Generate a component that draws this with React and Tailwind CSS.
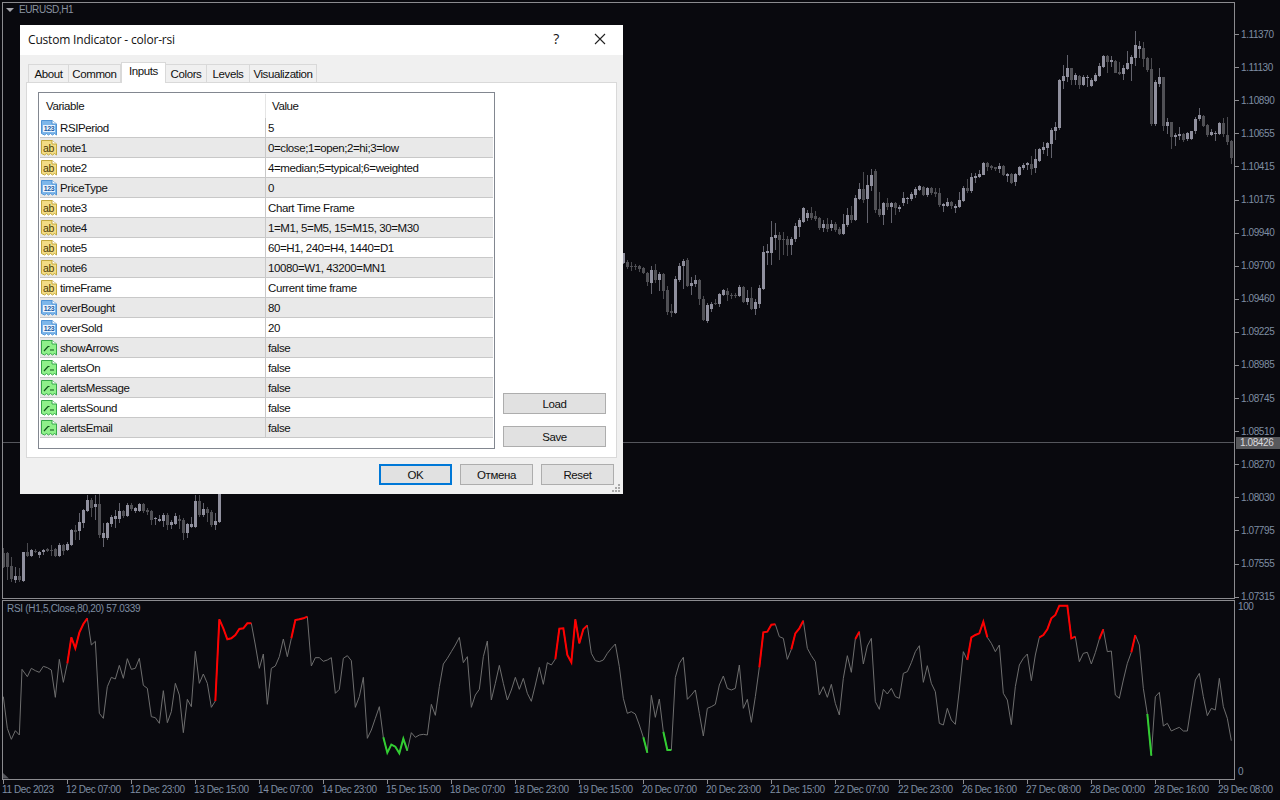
const L = `10 218 262 205 265 d,22 218 262 216 300 d,34 258 297 230 305 d,46 288 300 260 310 l,58 288 300 265 305 d,70 216 303 215 305 l,82 216 228 190 230 d,94 210 228 208 232 l,106 212 216 208 220 d,118 216 225 212 235 l,130 210 216 208 225 l,142 208 213 204 216 d,154 210 213 195 228 d,166 207 228 205 230 d,178 195 228 190 230 l,190 195 213 192 225 d,202 192 210 185 214 l,214 150 195 148 198 l,226 150 156 135 180 d,238 126 153 100 180 l,250 90 129 88 145 l,262 60 93 45 95 l,274 60 84 55 110 d,286 72 81 45 120 l,298 72 165 40 175 d,310 159 174 130 200 l,322 129 174 125 180 l,334 111 132 105 140 l,346 108 117 90 145 l,358 93 117 68 130 l,370 93 108 90 115 d,382 75 108 70 112 l,394 75 87 70 92 d,406 84 93 80 100 l,418 72 93 68 96 l,430 72 93 68 100 d,442 90 96 85 105 d,454 93 120 90 135 d,466 114 118 110 135 l,478 118 122 105 125 l,490 105 123 100 142 l,502 105 135 100 150 d,514 126 135 120 148 l,526 108 132 100 135 l,538 117 123 105 148 d,550 120 159 115 180 d,562 132 159 128 175 l,574 132 141 110 145 l,586 63 141 45 143 l,598 63 105 45 110 d,610 87 105 70 110 l,622 87 99 80 125 d,634 96 135 90 140 d,646 123 135 100 150 l,658 42 126 40 130 l`;
const M = `10 760 790 758 792 l,22 786 800 780 808 d,34 798 801 786 812 d,46 798 801 792 810 d,58 798 806 795 815 d,70 804 820 800 822 d,82 820 846 815 858 d,94 810 849 798 882 l,106 810 840 793 850 d,118 822 840 815 872 l,130 822 872 818 898 d,142 870 936 858 945 d,154 933 939 912 950 d,166 837 939 828 942 l,178 798 840 790 846 l,190 783 798 778 868 l,202 780 858 774 862 d,214 849 858 830 885 l,226 840 852 825 860 l,238 840 897 838 915 d,250 897 960 888 963 d,262 915 963 908 968 l,274 912 927 905 936 l,286 909 912 898 915 d,298 882 912 880 920 l,310 870 885 867 888 l,322 873 885 864 902 d,334 885 888 880 898 d,346 885 888 878 895 d,358 861 888 855 892 l,370 861 906 858 910 d,382 894 906 870 915 l,394 894 927 862 930 d,406 906 927 898 945 l,418 864 912 856 925 l,430 756 866 738 870 l,442 753 759 732 795 l,454 711 759 662 795 l,466 705 714 668 750 l,478 705 720 696 780 d,490 717 720 696 765 d,502 717 735 708 768 d,514 717 735 712 765 l,526 678 717 670 725 l,538 660 681 655 710 l,550 624 666 620 668 l,562 639 654 630 662 l,574 639 654 620 660 d,586 648 657 634 662 d,598 654 684 650 690 d,610 672 684 660 695 l,622 672 687 655 695 d,634 672 684 660 692 l,646 672 690 665 695 d,658 687 702 680 705 d,670 672 702 642 704 l,682 645 675 625 680 l,694 645 660 618 668 d,706 594 660 585 662 l,718 567 597 548 600 l,730 567 600 516 610 d,742 555 597 525 668 l,754 525 558 507 572 l,766 513 630 507 640 d,778 627 645 575 650 d,790 609 645 605 675 l,802 609 621 595 630 d,814 609 621 605 668 l,826 609 624 605 645 d,838 621 627 615 635 l,850 594 609 575 618 l,862 594 597 590 612 l,874 582 597 575 602 l,886 567 585 562 594 l,898 558 570 555 572 l,910 561 585 558 588 d,922 564 585 560 590 l,934 564 579 562 585 d,946 576 582 565 590 d,958 579 615 565 620 d,970 612 618 608 636 l,982 606 618 595 620 l`;
const R = `4 606 618 604 628 d,16 618 624 612 638 l,28 600 621 575 625 l,40 564 603 558 606 l,52 564 573 538 578 d,64 531 573 520 578 l,76 528 534 520 548 l,88 522 531 510 534 l,100 489 525 487 526 l,112 489 501 486 512 d,124 498 504 495 510 d,136 502 507 500 512 d,148 498 507 490 520 l,160 498 525 496 528 d,172 522 528 518 545 l,184 522 549 518 552 d,196 522 546 520 558 l,208 501 525 497 528 l,220 495 504 490 510 l,232 489 495 486 510 l,244 492 507 468 525 d,256 477 504 447 520 l,268 447 483 445 485 l,280 441 450 426 462 l,292 429 444 426 468 l,304 390 432 384 474 l,316 381 393 365 420 l,328 240 384 238 390 l,340 228 243 195 267 l,352 204 231 165 245 l,364 204 240 204 255 d,376 225 240 218 255 l,388 228 255 225 268 d,400 231 255 225 258 l,412 231 234 224 262 l,424 240 258 235 260 l,436 225 243 220 245 l,448 198 228 190 230 l,460 168 201 165 205 l,472 168 186 165 220 d,484 180 186 168 200 l,496 183 219 180 220 d,508 216 222 186 225 d,520 204 222 195 240 l,532 189 207 153 210 l,544 171 192 165 243 l,556 135 174 93 198 l,568 138 147 123 175 l,580 144 177 125 200 d,592 175 210 172 215 d,604 207 372 175 378 d,616 246 372 240 378 l,628 231 252 205 262 l,640 231 378 230 392 d,652 366 378 355 402 l,664 366 411 365 447 d,676 405 411 400 438 l,688 402 408 382 420 l,700 402 420 400 425 d,712 399 417 395 423 l,724 393 417 392 420 l,736 357 393 350 402 l,748 345 357 324 362 l,760 348 378 345 382 d,772 375 405 372 410 d,784 396 405 388 408 l,796 399 402 392 424 l,808 369 402 365 406 l,820 369 402 355 410 d,832 405 426 350 435 d,844 423 474 420 492 d`;
const parse = (s, ox, oy) => s.split(",").map((r) => { const p = r.split(" "); return { x: Math.round(ox + +p[0] / 3), t: oy + +p[1] / 3, b: oy + +p[2] / 3, h: oy + +p[3] / 3, l: oy + +p[4] / 3, c: p[5] }; });
const candles = [...parse(L, 0, 480), ...parse(M, 620, 0), ...parse(R, 950, 0)];

const A = `10:650 22:745 34:778 46:752 58:765 66:568 82:590 94:565 106:572 118:577 130:559 142:563 154:570 166:652 178:538 190:607 202:550 214:472 226:505 238:458 250:432 262:415 274:495 286:484 298:700 310:715 322:620 334:592 346:597 358:556 370:595 382:536 394:568 406:565 418:535 430:616 442:625 454:710 466:713 478:730 490:632 502:728 514:695 526:610 538:645 550:758 562:658 574:680 586:514 598:610 610:582 622:610 634:682 646:663 658:418 670:445 682:478 694:475 706:465 718:447 730:445 742:430 754:430 766:495 778:565 790:522 802:673 814:565 826:558 838:530 850:477 862:530 874:475 886:420 898:418 910:415 922:410 934:558 946:533 958:533`;
const B = `10:214 22:210 34:203 46:310 58:298 70:205 82:197 94:212 106:352 118:320 130:262 142:445 154:420 166:385 178:350 190:442 202:488 214:464 226:470 238:490 250:446 262:482 274:428 286:442 298:435 310:433 322:435 334:343 346:376 358:290 370:222 382:205 394:185 406:165 418:142 430:218 442:200 454:352 466:315 478:298 490:200 502:153 514:330 526:280 538:226 550:280 562:330 574:300 586:262 598:298 610:265 622:310 634:334 646:285 658:232 670:283 682:218 694:225 706:207 718:116 730:115 742:195 754:217 766:88 778:160 790:118 802:106 814:190 826:212 838:215 850:210 862:190 874:175 886:162 898:230 910:325 922:370 934:365 946:372 958:405 970:442 982:488 994:316 1006:382 1018:327 1030:425 1042:480 1054:480 1066:262 1078:220 1090:202 1102:328 1114:315 1126:300 1138:370 1150:438 1162:355 1174:350 1186:343 1198:285 1210:258 1222:295 1234:300 1246:295 1258:225 1270:355 1282:328 1294:397 1306:320 1318:232 1330:127 1342:125 1354:104 1366:103 1378:140 1390:145 1402:208 1414:178 1426:130 1438:115`;
const C = `10:92 22:175 34:197 46:215 58:315 70:290 82:322 94:283 106:340 118:375 130:265 142:197 154:247 166:147 178:125 190:222 202:168 214:145 226:335 238:358 250:298 262:312 274:295 286:320 298:325 310:250 322:245 334:218 346:185 358:167 370:277 382:227 394:280 406:305 418:400 430:405 442:355 454:390 466:403 478:300 490:185 502:210 514:142 526:135 538:130 550:95 562:142 574:160 586:185 598:165 610:310 622:330 634:404 646:290 658:225 670:205 682:192 694:272 706:195 718:142 730:135 742:118 754:85 766:75 778:47 790:47 802:47 814:145 826:140 838:215 850:190 862:187 874:222 886:188 898:147 910:118 922:185 934:183 946:315 958:325 970:270 982:220 994:187 1006:135 1018:165 1030:295 1042:372 1054:497 1066:320 1078:307 1090:408 1102:400 1114:423 1126:417 1138:412 1150:423 1162:423 1174:345 1186:270 1198:250 1210:320 1222:377 1234:355 1246:360 1258:265 1270:350 1282:385 1294:452`;
const pts = (s, ox, oy) => s.split(" ").map((r) => { const [a, b] = r.split(":"); return [ox + +a / 3, oy + +b / 3]; });
const rsi = [...pts(A, 0, 480), ...pts(B, 320, 590), ...pts(C, 800, 590)];
const seg = (from, to) => { const i = rsi.findIndex((p) => Math.abs(p[0] - from) < 2); const j = rsi.findIndex((p) => Math.abs(p[0] - to) < 2); return rsi.slice(i, j + 1).map((p) => p.join(",")).join(" "); };
const reds = [[67, 87], [215, 251], [291, 307], [555, 587], [759, 775], [791, 803], [855, 859], [967, 987], [1039, 1075], [1099, 1103], [1131, 1135]];
const greens = [[383, 407], [643, 647], [663, 671], [1147, 1151]];

const yLabels = ["1.11370","1.11130","1.10890","1.10655","1.10415","1.10175","1.09940","1.09700","1.09460","1.09225","1.08985","1.08745","1.08510","1.08270","1.08030","1.07795","1.07555","1.07315"];
const xLabels = ["11 Dec 2023","12 Dec 07:00","12 Dec 23:00","13 Dec 15:00","14 Dec 07:00","14 Dec 23:00","15 Dec 15:00","18 Dec 07:00","18 Dec 23:00","19 Dec 15:00","20 Dec 07:00","20 Dec 23:00","21 Dec 15:00","22 Dec 07:00","22 Dec 23:00","26 Dec 16:00","27 Dec 08:00","28 Dec 00:00","28 Dec 16:00","29 Dec 08:00"];
const rows = [["n","RSIPeriod","5"],["s","note1","0=close;1=open;2=hi;3=low"],["s","note2","4=median;5=typical;6=weighted"],["n","PriceType","0"],["s","note3","Chart Time Frame"],["s","note4","1=M1, 5=M5, 15=M15, 30=M30"],["s","note5","60=H1, 240=H4, 1440=D1"],["s","note6","10080=W1, 43200=MN1"],["s","timeFrame","Current time frame"],["n","overBought","80"],["n","overSold","20"],["b","showArrows","false"],["b","alertsOn","false"],["b","alertsMessage","false"],["b","alertsSound","false"],["b","alertsEmail","false"]];
const tabs = [["About","w-[41px]"],["Common","w-[52px]"],["Inputs","w-[45px]"],["Colors","w-[41px]"],["Levels","w-[43px]"],["Visualization","w-[67px]"]];

function TypeIcon({ kind }) {
  const c = { n: ["#7db6ea", "#4f93d4", "#1c5aa0"], s: ["#f3dc84", "#c2a83e", "#4a3c08"], b: ["#8ff08a", "#37a84a", "#0f4f1a"] }[kind];
  const d = "M0.5 0.5H11L15.5 4V15L13.5 13.5L11.5 15L9.5 13.5L7.5 15L5.5 13.5L3.5 15L0.5 13.5Z";
  return (
    <svg width="16" height="16" viewBox="0 0 16 16" className="shrink-0 block">
      <path d={d} fill={c[0]} stroke={c[1]} />
      <path d="M11 0.5V4H15.5" fill="#ffffff" stroke={c[1]} />
      {kind === "n" && <rect x="2" y="5" width="12" height="7" fill="#eaf4fd" />}
      {kind === "n" && <text x="8" y="11" textAnchor="middle" fontSize="7" fontWeight="700" fill={c[2]} fontFamily="Liberation Sans">123</text>}
      {kind === "s" && <text x="7.5" y="11.5" textAnchor="middle" fontSize="10.5" fill={c[2]} fontFamily="Liberation Sans">ab</text>}
      {kind === "b" && <path d="M3 11L7 6.5H8.5M9 10H13" fill="none" stroke={c[2]} strokeWidth="1.2" />}
    </svg>
  );
}

function Btn({ children, def, cls }) {
  return <div className={`flex items-center justify-center bg-[#e1e1e1] text-[#111] ${def ? "border-2 border-[#0078d7]" : "border border-[#adadad]"} ${cls}`}>{children}</div>;
}

function Dialog() {
  return (
    <div className="absolute left-[20px] top-[25px] w-[603px] h-[469px] bg-[#f0f0f0] flex flex-col text-[11.5px] text-[#111] font-['Liberation_Sans',sans-serif] tracking-[-0.4px]">
      <div className="h-[30px] bg-white flex items-center pl-[8px] relative shrink-0">
        <span className="font-['Open_Sans',sans-serif] text-[12px] tracking-[-0.18px] text-[#111]">Custom Indicator - color-rsi</span>
        <span className="ml-auto mr-[64px] mb-[3px] text-[14px] font-['Open_Sans',sans-serif]">?</span>
        <svg width="12" height="12" viewBox="0 0 12 12" className="absolute right-[17px] top-[8px]"><path d="M1 1L11 11M11 1L1 11" stroke="#222" strokeWidth="1.1" fill="none" /></svg>
      </div>
      <div className="flex items-end h-[27px] pl-[8px] shrink-0">
        {tabs.map(([t, w]) => t === "Inputs"
          ? <div key={t} className={`h-[21px] ${w} pt-[2px] bg-white border border-b-0 border-[#d9d9d9] -mb-px relative z-10 flex justify-center items-start`}>{t}</div>
          : <div key={t} className={`h-[18px] ${w} bg-[#f0f0f0] border border-b-0 border-l-0 first:border-l border-[#d9d9d9] flex justify-center items-center`}>{t}</div>)}
      </div>
      <div className="mx-[6px] h-[376px] bg-white border border-[#d9d9d9] shrink-0 flex pl-[11px] pt-[9px]">
        <div className="w-[457px] h-[357px] border border-[#828790] bg-white shrink-0 p-px">
          <div className="flex h-[24px] items-center">
            <div className="w-[226px] h-full pl-[6px] flex items-center border-r border-[#e5e5e5]">Variable</div>
            <div className="pl-[6px]">Value</div>
          </div>
          {rows.map(([k, n, v], i) => (
            <div key={n} className={`flex h-[20px] border-b border-[#c8c8c8] ${i % 2 ? "bg-[#e9e9e9]" : "bg-white"}`}>
              <div className="w-[226px] flex items-center pl-[1px] gap-[3px] border-r border-[#c8c8c8]"><TypeIcon kind={k} /><span>{n}</span></div>
              <div className="pl-[2px] flex items-center">{v}</div>
            </div>
          ))}
        </div>
        <div className="flex flex-col ml-[8px] pt-[301px]">
          <Btn cls="w-[103px] h-[21px]">Load</Btn>
          <Btn cls="w-[103px] h-[21px] mt-[12px]">Save</Btn>
        </div>
      </div>
      <div className="flex pl-[359px] pt-[6px] gap-[8px]">
        <Btn def cls="w-[73px] h-[21px]">OK</Btn>
        <Btn cls="w-[73px] h-[21px]">Отмена</Btn>
        <Btn cls="w-[73px] h-[21px]">Reset</Btn>
      </div>
      <svg width="9" height="9" viewBox="0 0 9 9" className="absolute right-[2px] bottom-[1px]" fill="#a9a9a9">
        <rect x="6" y="0" width="2" height="2" /><rect x="3" y="3" width="2" height="2" /><rect x="6" y="3" width="2" height="2" /><rect x="0" y="6" width="2" height="2" /><rect x="3" y="6" width="2" height="2" /><rect x="6" y="6" width="2" height="2" />
      </svg>
    </div>
  );
}

export default function App() {
  return (
    <div className="relative w-[1280px] h-[800px] overflow-hidden bg-[#09090e] flex flex-col pt-[2px] pl-[2px] font-['Liberation_Sans',sans-serif] text-[10px] tracking-[-0.4px] leading-[12px] text-[#7f8ea3]">
      <div className="flex h-[597px] shrink-0">
        <div className="relative w-[1233px] h-full border border-[#8b8b8f] shrink-0">
          <svg width="1231" height="595" viewBox="3 3 1231 595" className="block">
            <line x1="3" x2="1234" y1="442.5" y2="442.5" stroke="#55565c" />
            {candles.map((k, i) => (
              <g key={i} shapeRendering="crispEdges">
                <rect x={k.x} y={k.h} width="1" height={Math.max(k.l - k.h, 1)} fill={k.c === "l" ? "#62626c" : "#4a4a4f"} />
                <rect x={k.x - 1} y={k.t} width="3" height={Math.max(k.b - k.t, 1)} fill={k.c === "l" ? "#90909e" : "#505055"} />
              </g>
            ))}
          </svg>
          <div className="absolute left-[3px] top-[1px] flex items-center gap-[5px] text-[#8a93a0]">
            <span className="w-0 h-0 border-l-[4px] border-r-[4px] border-t-[4px] border-l-transparent border-r-transparent border-t-[#a7a7ad]" />
            <span>EURUSD,H1</span>
          </div>
        </div>
        <div className="flex-1 flex flex-col pt-[16px] min-w-0">
          {yLabels.map((y) => (
            <div key={y} className="h-[33.1px] flex items-center shrink-0">
              <span className="w-[4px] h-px bg-[#8b8b8f] shrink-0" />
              <span className="ml-[2px]">{y}</span>
            </div>
          ))}
        </div>
      </div>
      <div className="flex h-[180px] mt-px shrink-0">
        <div className="relative w-[1233px] h-full border border-[#8b8b8f] shrink-0">
          <svg width="1231" height="178" viewBox="3 601 1231 178" className="block">
            <polygon points="3,773 9,778.5 3,778.5" fill="#55565c" />
            <polyline points={rsi.map((p) => p.join(",")).join(" ")} fill="none" stroke="#6e6e6e" strokeWidth="1" />
            {reds.map(([a, b]) => <polyline key={a} points={seg(a, b)} fill="none" stroke="#ff0000" strokeWidth="2" />)}
            {greens.map(([a, b]) => <polyline key={a} points={seg(a, b)} fill="none" stroke="#32cd32" strokeWidth="2" />)}
          </svg>
          <span className="absolute left-[4px] top-[2px] tracking-[-0.3px]">RSI (H1,5,Close,80,20) 57.0339</span>
        </div>
        <div className="flex-1 flex flex-col justify-between pt-[1px] pb-[2px] pl-[3px] min-w-0">
          <span>100</span>
          <span>0</span>
        </div>
      </div>
      <div className="flex pl-px">
        {xLabels.map((x) => (
          <div key={x} className="w-[64px] shrink-0">
            <div className="h-[4px] w-px bg-[#8b8b8f]" />
            <div className="whitespace-nowrap -ml-px">{x}</div>
          </div>
        ))}
      </div>
      <div className="absolute left-[1236px] top-[437px] w-[44px] h-[12px] bg-[#58595c] text-[#d8d8dc] flex items-center pl-[4px]">1.08426</div>
      <Dialog />
    </div>
  );
}
